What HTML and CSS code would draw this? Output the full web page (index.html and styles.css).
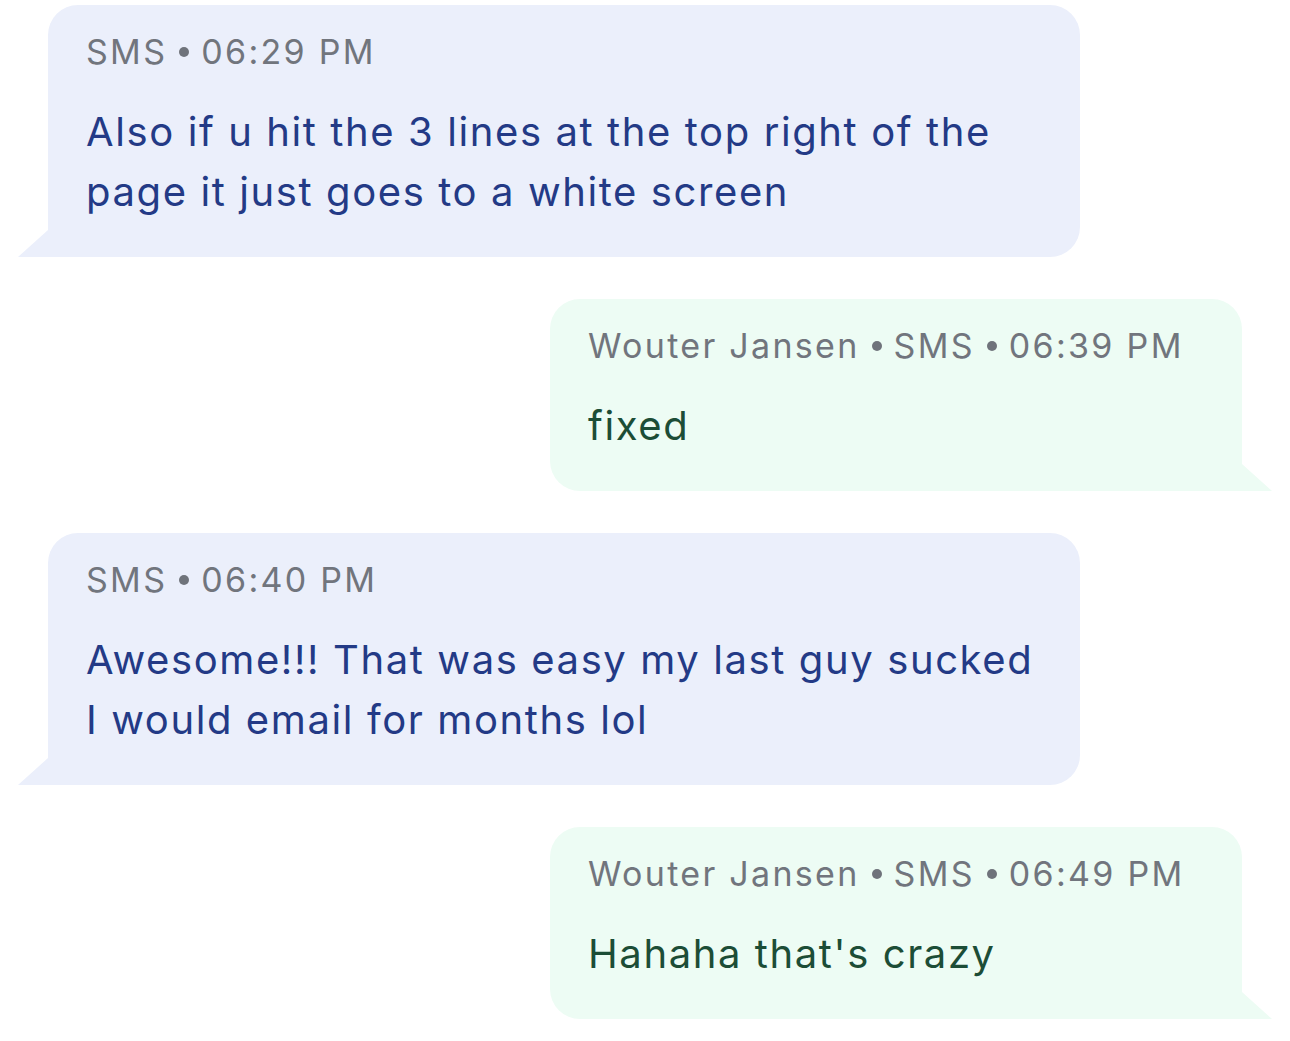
FILE: index.html
```html
<!DOCTYPE html>
<html>
<head>
<meta charset="utf-8">
<link rel="stylesheet" href="styles.css">
</head>
<body>
<div class="thread">
  <div class="msg in">
    <div class="meta">SMS<span class="dot"></span>06:29 PM</div>
    <div class="text">Also if u hit the 3 lines at the top right of the page it just goes to a white screen</div>
  </div>
  <div class="msg out">
    <div class="meta">Wouter Jansen<span class="dot"></span>SMS<span class="dot"></span>06:39 PM</div>
    <div class="text">fixed</div>
  </div>
  <div class="msg in">
    <div class="meta">SMS<span class="dot"></span>06:40 PM</div>
    <div class="text">Awesome!!! That was easy my last guy sucked I would email for months lol</div>
  </div>
  <div class="msg out">
    <div class="meta">Wouter Jansen<span class="dot"></span>SMS<span class="dot"></span>06:49 PM</div>
    <div class="text">Hahaha that's crazy</div>
  </div>
</div>
</body>
</html>
```
FILE: styles.css
```css
html, body {
  margin: 0;
  padding: 0;
  background: #ffffff;
}
body {
  font-family: Inter, "Noto Sans", sans-serif;
}
.thread {
  display: flex;
  flex-direction: column;
  gap: 42px;
  padding: 5px 18px 0 18px;
}
.msg {
  position: relative;
  box-sizing: border-box;
  padding: 23px 38px 35px 38px;
  border-radius: 30px;
}
.msg.in {
  align-self: flex-start;
  margin-left: 30px;
  width: 1032px;
  background: #ebeffb;
  border-bottom-left-radius: 0;
}
.msg.out {
  align-self: flex-end;
  margin-right: 30px;
  width: 692px;
  background: #edfcf4;
  border-bottom-right-radius: 0;
}
.msg::after {
  content: "";
  position: absolute;
  bottom: 0;
  width: 30px;
  height: 27px;
}
.msg.in::after {
  left: -30px;
  background: #ebeffb;
  clip-path: polygon(100% 0, 100% 100%, 0 100%);
}
.msg.out::after {
  right: -30px;
  background: #edfcf4;
  clip-path: polygon(0 0, 100% 100%, 0 100%);
}
.meta {
  font-size: 34px;
  line-height: 48px;
  color: #71757d;
  letter-spacing: 2.3px;
  white-space: nowrap;
}
.dot {
  display: inline-block;
  width: 10px;
  height: 10px;
  border-radius: 50%;
  background: #6f737b;
  margin: 0 12px 0 12px;
  vertical-align: 7px;
}
.text {
  margin-top: 26px;
  font-size: 40px;
  line-height: 60px;
  letter-spacing: 1.6px;
}
.in .text {
  color: #233a86;
}
.out .text {
  color: #1c4d36;
}
```
